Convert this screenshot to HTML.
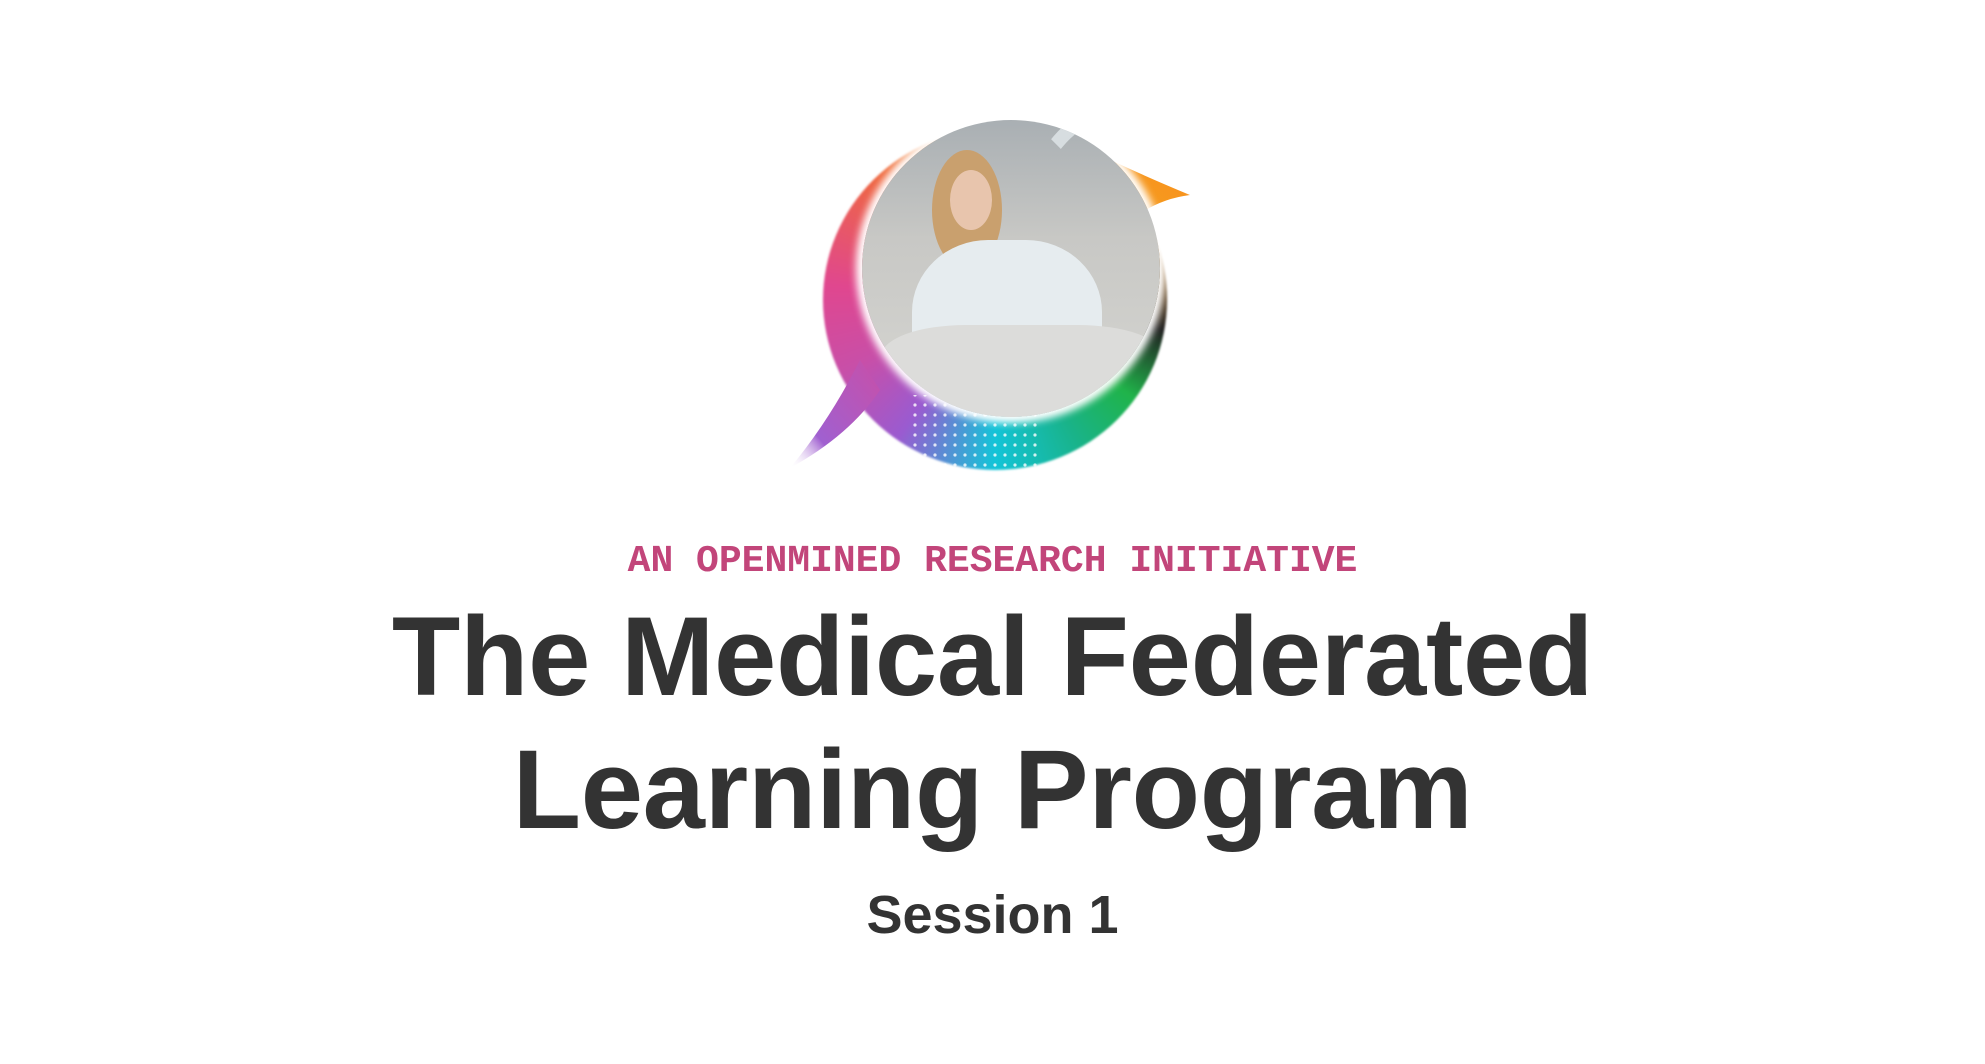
<!DOCTYPE html>
<html><head><meta charset="utf-8"><style>
html,body{margin:0;width:1985px;height:1064px;background:#fff;overflow:hidden}
.t{position:absolute;left:0;width:1985px;text-align:center;color:#333;font-family:"Liberation Sans",sans-serif;font-weight:bold}
</style></head><body>
<div style="position:absolute;left:823px;top:130px;width:344px;height:340px;border-radius:50%;background:conic-gradient(from 0deg,#f5a623 0deg,#f7941d 60deg,#222 100deg,#20b34a 125deg,#19b38a 150deg,#13c4d8 180deg,#9a5bd0 215deg,#c84fa8 245deg,#e0478f 275deg,#f06a3a 320deg,#f5a623 360deg);filter:blur(1px)"></div>
<svg style="position:absolute;left:0;top:0" width="1985" height="1064">
<defs><linearGradient id="tl" x1="0" y1="1" x2="1" y2="0"><stop offset="0" stop-color="#fff" stop-opacity="0"/><stop offset="0.3" stop-color="#a060d0"/><stop offset="1" stop-color="#c84fa8"/></linearGradient>
<linearGradient id="tr" x1="1" y1="0" x2="0" y2="1"><stop offset="0" stop-color="#fff" stop-opacity="0"/><stop offset="0.3" stop-color="#f7941d"/><stop offset="1" stop-color="#f5a623"/></linearGradient>
<pattern id="d" width="10" height="10" patternUnits="userSpaceOnUse"><circle cx="5" cy="5" r="1.6" fill="#fff" opacity="0.8"/></pattern></defs>
<path d="M790 468 Q850 435 880 390 L860 360 Q830 420 790 468Z" fill="url(#tl)"/>
<path d="M1190 195 Q1130 170 1090 150 L1120 230 Q1150 200 1190 195Z" fill="url(#tr)"/>
<rect x="908" y="395" width="130" height="75" fill="url(#d)"/>
</svg>
<div style="position:absolute;left:862px;top:120px;width:298px;height:297px;border-radius:50%;overflow:hidden;background:linear-gradient(180deg,#a9afb3 0%,#c8c8c5 40%,#d6d6d2 100%);box-shadow:0 0 8px 6px #fff">
<div style="position:absolute;left:70px;top:30px;width:70px;height:120px;border-radius:50%;background:#c9a06e"></div>
<div style="position:absolute;left:88px;top:50px;width:42px;height:60px;border-radius:50%;background:#e8c5ad"></div>
<div style="position:absolute;left:50px;top:120px;width:190px;height:180px;border-radius:40% 40% 0 0;background:#e6ecef"></div>
<div style="position:absolute;left:20px;top:205px;width:280px;height:100px;background:#dcdcda;border-radius:30% 30% 0 0"></div>
<div style="position:absolute;left:150px;top:-20px;width:200px;height:290px;border-radius:50%;border:14px solid #d7dde0;border-left-color:transparent;border-bottom-color:transparent"></div>
</div>
<div class="t" style="top:540px;font-family:'Liberation Mono',monospace;font-size:38px;color:#c2457a">AN OPENMINED RESEARCH INITIATIVE</div>
<div class="t" style="top:590px;font-size:112px;line-height:133px;letter-spacing:-0.3px">The Medical Federated<br>Learning Program</div>
<div class="t" style="top:883px;font-size:54px;line-height:64px">Session 1</div>
</body></html>
